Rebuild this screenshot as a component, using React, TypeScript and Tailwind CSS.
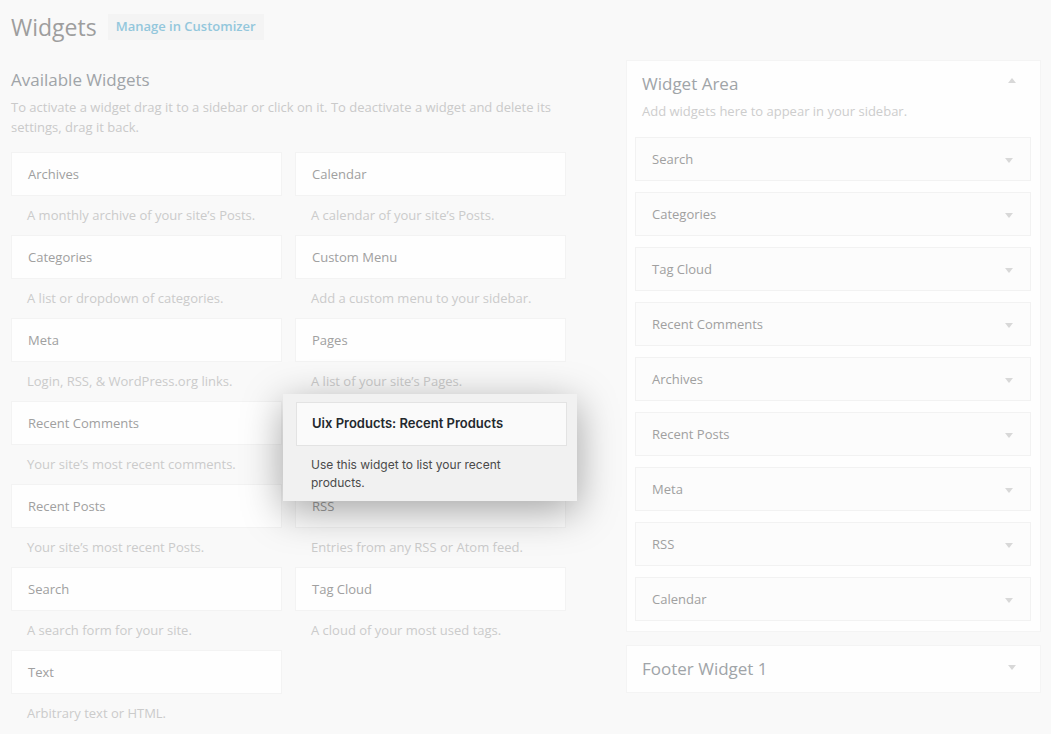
import { ReactNode } from "react";

const available = [
  { title: "Archives", desc: "A monthly archive of your site’s Posts." },
  { title: "Calendar", desc: "A calendar of your site’s Posts." },
  { title: "Categories", desc: "A list or dropdown of categories." },
  { title: "Custom Menu", desc: "Add a custom menu to your sidebar." },
  { title: "Meta", desc: "Login, RSS, & WordPress.org links." },
  { title: "Pages", desc: "A list of your site’s Pages." },
  { title: "Recent Comments", desc: "Your site’s most recent comments." },
  { title: "", desc: "" }, // slot of the widget being dragged
  { title: "Recent Posts", desc: "Your site’s most recent Posts." },
  { title: "RSS", desc: "Entries from any RSS or Atom feed." },
  { title: "Search", desc: "A search form for your site." },
  { title: "Tag Cloud", desc: "A cloud of your most used tags." },
  { title: "Text", desc: "Arbitrary text or HTML." },
];

const areaWidgets = [
  "Search",
  "Categories",
  "Tag Cloud",
  "Recent Comments",
  "Archives",
  "Recent Posts",
  "Meta",
  "RSS",
  "Calendar",
];

function Arrow({ up = false }: { up?: boolean }) {
  return (
    <svg width="8" height="5" viewBox="0 0 8 5" className="shrink-0">
      <path d={up ? "M0 5 L4 0 L8 5 Z" : "M0 0 L8 0 L4 5 Z"} fill="#d8d8d8" />
    </svg>
  );
}

function WidgetCard({ title, desc }: { title: string; desc: string }) {
  return (
    <div>
      <div className="h-[44px] flex items-center px-4 pt-[2px] bg-[#fefefe] border border-[#f3f3f3] text-[13px] text-[#a0a0a0]">
        {title}
      </div>
      <p className="h-[39px] pl-4 pt-[9px] text-[13px] leading-5 text-[#cbcbcb] whitespace-nowrap">{desc}</p>
    </div>
  );
}

function Panel({ children }: { children: ReactNode }) {
  return <div className="bg-[#fefefe] border border-[#f4f4f4]">{children}</div>;
}

export default function App() {
  return (
    <div
      className="relative w-[1051px] h-[734px] overflow-hidden bg-[#f9f9f9] flex pl-[11px]"
      style={{ fontFamily: "'Open Sans', sans-serif" }}
    >
      {/* Left column */}
      <div className="w-[555px] shrink-0">
        <div className="flex items-center gap-[11px] pt-[13px]">
          <h1 className="text-[23px] leading-[28px] text-[#9e9e9e]">Widgets</h1>
          <span className="px-2 h-[26px] flex items-center bg-[#f4f4f4] text-[13px] font-semibold text-[#93c7dc]">
            Manage in Customizer
          </span>
        </div>
        <h2 className="mt-[27px] text-[17px] leading-6 text-[#a0a4a8]">Available Widgets</h2>
        <p className="mt-[5px] text-[13px] leading-5 text-[#cacaca] pr-2">
          To activate a widget drag it to a sidebar or click on it. To deactivate a widget and delete its settings, drag it back.
        </p>
        <div className="mt-[15px] grid grid-cols-2 gap-x-[13px]">
          {available.map((w, i) => (
            <WidgetCard key={i} title={w.title} desc={w.desc} />
          ))}
        </div>
      </div>

      {/* Right column */}
      <div className="ml-[60px] w-[415px] shrink-0 pt-[60px] flex flex-col gap-[13px]">
        <Panel>
          <div className="flex items-center justify-between pl-[15px] pr-[24px] pt-[11px]">
            <h3 className="text-[17px] leading-6 text-[#a0a4a8]">Widget Area</h3>
            <div className="-mt-2">
              <Arrow up />
            </div>
          </div>
          <p className="pl-[15px] mt-[5px] text-[13px] leading-5 text-[#cdcdcd]">
            Add widgets here to appear in your sidebar.
          </p>
          <div className="mt-[16px] pl-[8px] pr-[9px] pb-[10px] flex flex-col gap-[11px]">
            {areaWidgets.map((name) => (
              <div
                key={name}
                className="h-[44px] flex items-center justify-between pl-4 pr-[17px] pt-[2px] bg-[#fcfcfc] border border-[#f2f2f2] text-[13px] text-[#a0a0a0]"
              >
                <span>{name}</span>
                <Arrow />
              </div>
            ))}
          </div>
        </Panel>
        <Panel>
          <div className="h-[46px] flex items-center justify-between pl-[15px] pr-[24px]">
            <h3 className="text-[17px] leading-6 text-[#a0a4a8]">Footer Widget 1</h3>
            <div className="-mt-1">
              <Arrow />
            </div>
          </div>
        </Panel>
      </div>

      {/* Drag helper */}
      <div
        className="absolute left-[283px] top-[394px] w-[294px] h-[107px] bg-[#f1f1f1] shadow-[0_10px_40px_rgba(0,0,0,0.36)] pl-[13px] pr-[10px] pt-[8px]"
        style={{ fontFamily: "Inter, 'Liberation Sans', sans-serif" }}
      >
        <div className="h-[44px] flex items-center px-[15px] bg-[#fafafa] border border-[#e3e3e3] text-[13px] font-semibold text-[#23282d]">
          Uix Products: Recent Products
        </div>
        <p className="pl-[15px] pt-[10px] text-[12px] leading-[18px] text-[#4a4a4a]">
          Use this widget to list your recent
          <br />
          products.
        </p>
      </div>
    </div>
  );
}
